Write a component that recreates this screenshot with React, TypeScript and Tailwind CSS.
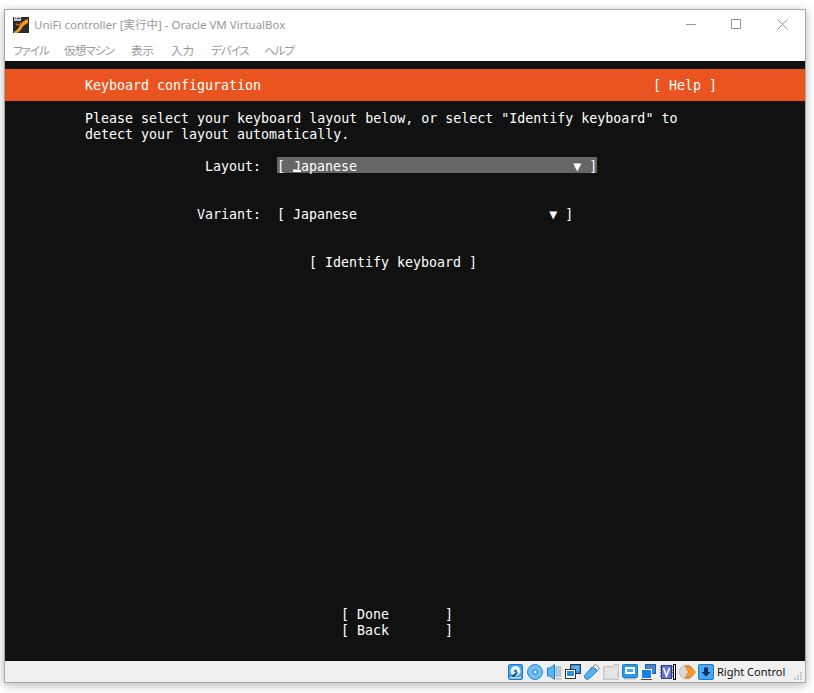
const mono = "font-['DejaVu_Sans_Mono','Liberation_Mono',monospace] text-[13.3px] leading-[16px] whitespace-pre text-[#fff]";

function AppIcon() {
  return (
    <svg width="16" height="16" viewBox="0 0 16 16" className="shrink-0">
      <rect width="16" height="16" fill="#2b2b2e" />
      <path d="M1 15 C4 13 6 11 7 8 C8 6 11 3 15 2 L15 6 C12 7 10 9 9 11 C8 13 6 15 4 16 L1 16 Z" fill="#ef9a1e" />
      <path d="M3 6 C5 8 7 7 8 5 L9 6 C7 9 5 9 3 8 Z" fill="#d8501c" />
      <rect x="1" y="0" width="7" height="4" fill="#c9c9c9" />
      <rect x="2" y="1" width="1" height="1" fill="#555" />
      <rect x="4" y="1" width="3" height="1" fill="#555" />
    </svg>
  );
}

function DiskIcon() {
  return (
    <svg width="15" height="16" viewBox="0 0 15 16">
      <rect x="0.5" y="0.5" width="14" height="15" rx="1.5" fill="#4aa3ea" stroke="#1d76cc" />
      <circle cx="7.5" cy="7" r="5" fill="#e8f3fb" />
      <circle cx="7.5" cy="7" r="1.5" fill="#2a6fb5" />
      <path d="M3 12 L9 8 L10 9 L6 13 Z" fill="#17497f" />
      <rect x="2" y="13" width="11" height="1.5" fill="#bfe0f7" />
    </svg>
  );
}

function CdIcon() {
  return (
    <svg width="16" height="16" viewBox="0 0 16 16">
      <circle cx="8" cy="8" r="7.5" fill="#6cc0f2" stroke="#2a86d4" />
      <circle cx="8" cy="8" r="2.2" fill="#dff2fd" stroke="#1d72c2" />
    </svg>
  );
}

function AudioIcon() {
  return (
    <svg width="15" height="16" viewBox="0 0 15 16">
      <path d="M0.5 4 L3 4 L7.5 0.5 L7.5 15.5 L3 12 L0.5 12 Z" fill="#5db5ee" stroke="#1f7fd0" />
      <rect x="8.5" y="2" width="2" height="11" fill="#7fc3ef" />
      <rect x="11" y="2" width="3.5" height="11" fill="#c2c5c9" />
      <rect x="9" y="14" width="5.5" height="1.5" fill="#b8b8b8" />
    </svg>
  );
}

function NetworkIcon() {
  return (
    <svg width="16" height="16" viewBox="0 0 16 16">
      <rect x="5.5" y="0.5" width="10" height="9" fill="#2f8fe0" stroke="#333" />
      <rect x="7" y="2" width="7" height="5" fill="#55aef0" />
      <rect x="0.5" y="5.5" width="10" height="9" fill="#fff" stroke="#333" />
      <rect x="2" y="7" width="7" height="5" fill="#2f8fe0" />
    </svg>
  );
}

function UsbIcon() {
  return (
    <svg width="16" height="16" viewBox="0 0 16 16">
      <path d="M1 11 L8 3 L13 7 L6 14 C4 16 1 15.5 0.7 13.5 C0.6 12.5 0.6 11.8 1 11 Z" fill="#58b0ee" stroke="#1f7fd0" />
      <path d="M9 2.5 L11.5 0.5 L15.5 4 L13.5 6.5 Z" fill="#fff" stroke="#777" />
    </svg>
  );
}

function FolderIcon() {
  return (
    <svg width="16" height="16" viewBox="0 0 16 16">
      <path d="M0.5 2.5 L10 2.5 L11 0.5 L15.5 0.5 L15.5 15.5 L0.5 15.5 Z" fill="#dcdcdc" stroke="#c4c4c4" />
      <rect x="2" y="4" width="12" height="10" fill="#e4e4e4" />
    </svg>
  );
}

function DisplayIcon() {
  return (
    <svg width="16" height="16" viewBox="0 0 16 16">
      <rect x="0.5" y="0.5" width="15" height="13" rx="1" fill="#2f9ae8" stroke="#1a78c8" />
      <rect x="3" y="3" width="10" height="7" fill="#fff" />
      <rect x="5" y="5" width="6" height="3" fill="#4aa9ec" />
      <rect x="2" y="14" width="12" height="1.5" fill="#bcbcbc" />
    </svg>
  );
}

function CaptureIcon() {
  return (
    <svg width="15" height="16" viewBox="0 0 15 16">
      <rect x="4.5" y="0.5" width="10" height="9" fill="#4b7fd0" stroke="#2a5aa8" />
      <rect x="0.5" y="5.5" width="10" height="9" fill="#1584e6" stroke="#ffffff" />
      <rect x="0" y="15" width="11" height="1" fill="#444" />
    </svg>
  );
}

function VtIcon() {
  return (
    <svg width="13" height="16" viewBox="0 0 13 16">
      <rect x="1.5" y="1.5" width="10" height="13" fill="#6a75cf" stroke="#2d3a9c" />
      <path d="M0 3 H1.5 M0 6 H1.5 M0 9 H1.5 M0 12 H1.5 M11.5 3 H13 M11.5 6 H13 M11.5 9 H13 M11.5 12 H13" stroke="#2d3a9c" />
      <path d="M3.5 4 L6.5 12 L9.5 4" fill="none" stroke="#fff" strokeWidth="1.6" />
    </svg>
  );
}

function MouseIcon() {
  return (
    <svg width="17" height="16" viewBox="0 0 17 16">
      <circle cx="7.5" cy="8" r="7" fill="#d8d8d8" stroke="#bdbdbd" />
      <path d="M6 2 L11 2 L16.5 8 L11 14 L6 14 L9.5 8 Z" fill="#f59a2c" stroke="#e0701a" strokeWidth="0.7" />
    </svg>
  );
}

function KeyboardIcon() {
  return (
    <svg width="16" height="16" viewBox="0 0 16 16">
      <rect x="0.5" y="0.5" width="15" height="15" rx="1.5" fill="#4aa9ec" stroke="#1a78c8" />
      <path d="M6 3.5 H10 V8 H12.5 L8 12.5 L3.5 8 H6 Z" fill="#0f2f6e" />
    </svg>
  );
}

function Grip() {
  return (
    <svg width="9" height="9" viewBox="0 0 9 9" className="self-end mb-[1px]">
      <g fill="#c4c4c4">
        <rect x="6" y="0" width="2" height="2" />
        <rect x="3" y="3" width="2" height="2" />
        <rect x="6" y="3" width="2" height="2" />
        <rect x="0" y="6" width="2" height="2" />
        <rect x="3" y="6" width="2" height="2" />
        <rect x="6" y="6" width="2" height="2" />
      </g>
    </svg>
  );
}

export default function App() {
  return (
    <div className="h-[693px] w-[814px] overflow-hidden bg-white pl-[4px] pt-[9px]">
      <div className="flex h-[674px] w-[802px] flex-col border border-[#a8a8a8] bg-white shadow-[0_2px_9px_rgba(0,0,0,0.3)]">
        <div className="h-[51px] shrink-0 bg-white font-['Noto_Sans','Noto_Sans_CJK_JP',sans-serif] text-[#999]">
          <div className="flex h-[30px] items-center">
            <div className="ml-[8px] flex items-center">
              <AppIcon />
              <span className="ml-[5px] text-[11.5px] leading-[16px]">UniFi controller [実行中] - Oracle VM VirtualBox</span>
            </div>
            <div className="ml-auto flex items-center pb-[2px]">
              <div className="mr-[35px] h-px w-[10px] bg-[#999]" />
              <div className="mr-[36px] h-[10px] w-[10px] border border-[#999]" />
              <svg width="11" height="11" viewBox="0 0 11 11" className="mr-[17px]">
                <path d="M0.5 0.5 L10.5 10.5 M10.5 0.5 L0.5 10.5" stroke="#999" />
              </svg>
            </div>
          </div>
          <div className="flex h-[20px] items-center pl-[8px] pt-[2px] font-['Noto_Sans_CJK_JP',sans-serif] text-[11.5px] [font-feature-settings:'palt']">
            <span className="w-[51px] tracking-[-1px]">ファイル</span>
            <span className="w-[67px] tracking-[-0.8px]">仮想マシン</span>
            <span className="w-[40px]">表示</span>
            <span className="w-[40px]">入力</span>
            <span className="w-[53px] tracking-[-1px]">デバイス</span>
            <span className="tracking-[-1px]">ヘルプ</span>
          </div>
        </div>

        <div className="flex h-[600px] shrink-0 flex-col bg-[#111111] pt-[8px]">
          <div className={`${mono} flex h-[32px] items-center justify-between bg-[#e95420] pl-[80px] pr-[88px] pt-[2px]`}>
            <span>Keyboard configuration</span>
            <span>[ Help ]</span>
          </div>
          <div className={`${mono} pl-[80px] pt-[10px]`}>
            <div>Please select your keyboard layout below, or select "Identify keyboard" to</div>
            <div>detect your layout automatically.</div>
          </div>
          <div className="mt-[14px] flex pl-[192px]">
            <div className={`${mono} w-[64px] pt-[2px] text-right`}>Layout:</div>
            <div className={`${mono} relative ml-[16px] h-[16px] w-[320px] bg-[#666666]`}>
              <span className="relative top-[2px]">[ Japanese                           ▼ ]</span>
              <div className="absolute bottom-px left-[16px] h-[2px] w-[8px] bg-white" />
            </div>
          </div>
          <div className="mt-[32px] flex pl-[192px]">
            <div className={`${mono} w-[64px] text-right`}>Variant:</div>
            <div className={`${mono} ml-[16px]`}>[ Japanese                        ▼ ]</div>
          </div>
          <div className={`${mono} mt-[32px] pl-[304px]`}>[ Identify keyboard ]</div>
          <div className={`${mono} mt-auto pb-[22px] pl-[336px]`}>
            <div>[ Done       ]</div>
            <div>[ Back       ]</div>
          </div>
        </div>

        <div className="flex h-[21px] shrink-0 items-center justify-end bg-[#f0f0f0] pr-[2px]">
          <div className="flex items-center">
            <div className="mr-[4px]"><DiskIcon /></div>
            <div className="mr-[4px]"><CdIcon /></div>
            <div className="mr-[3px]"><AudioIcon /></div>
            <div className="mr-[3px]"><NetworkIcon /></div>
            <div className="mr-[3px]"><UsbIcon /></div>
            <div className="mr-[3px]"><FolderIcon /></div>
            <div className="mr-[3px]"><DisplayIcon /></div>
            <div className="mr-[4px]"><CaptureIcon /></div>
            <div><VtIcon /></div>
            <div className="mr-[3px] h-[16px] w-[3px] border border-black bg-white" />
            <div className="mr-[2px]"><MouseIcon /></div>
            <div className="mr-[3px]"><KeyboardIcon /></div>
            <span className="mr-[9px] w-[68px] whitespace-nowrap font-['Noto_Sans',sans-serif] text-[11px] leading-[16px] text-[#111]">Right Control</span>
          </div>
          <Grip />
        </div>
      </div>
    </div>
  );
}
